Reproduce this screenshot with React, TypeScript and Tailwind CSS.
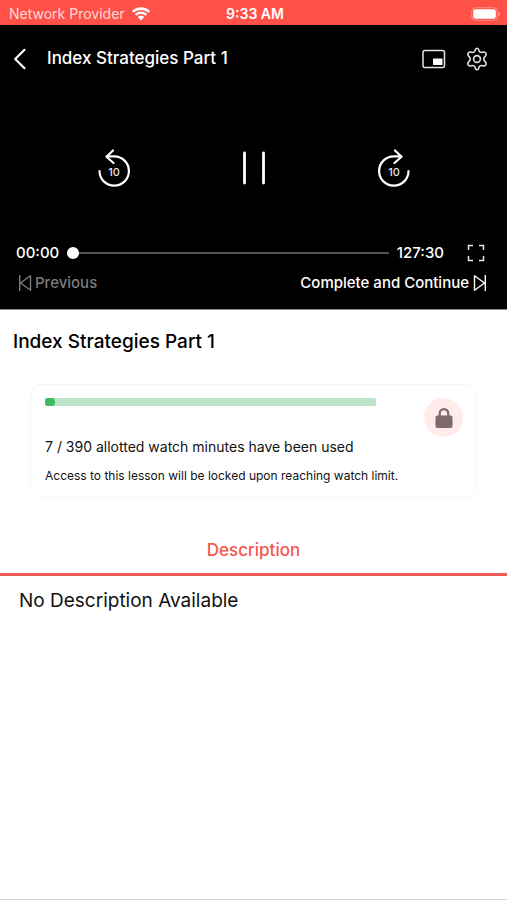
import React, { useState } from 'react';

const WifiIcon = () => (
    <svg width="20" height="14" viewBox="0 0 20 14" fill="white" aria-hidden="true">
        <path d="M10 0.2C6.400 .2 3.200 1.600 .8 3.900L2.600 5.800C4.500 4 7.100 2.900 10 2.900s5.500 1.100 7.400 2.900l1.800-1.900C16.800 1.600 13.600.2 10 .2Z" />
        <path d="M10 4.500c-2.400 0-4.600.9-6.200 2.500l1.800 1.800C6.800 7.700 8.300 7.100 10 7.100s3.200.6 4.400 1.700L16.200 7C14.600 5.400 12.400 4.500 10 4.500Z" />
        <path d="M10 8.700c-1.300 0-2.400.5-3.200 1.300L10 13.400l3.200-3.400C12.400 9.200 11.300 8.700 10 8.700Z" />
    </svg>
);

const BatteryIcon = () => (
    <svg width="30" height="14" viewBox="0 0 30 14" aria-hidden="true">
        <rect x="0.7" y="0.7" width="25.6" height="12.6" rx="3.8" fill="none" stroke="white" strokeOpacity="0.35" />
        <rect x="2.2" y="2.2" width="22.6" height="9.6" rx="2.4" fill="white" />
        <path d="M27.500 4.800c1.100.4 1.700 1.200 1.700 2.200s-.6 1.800-1.700 2.200Z" fill="white" fillOpacity="0.45" />
    </svg>
);

const BackIcon = () => (
    <svg width="14" height="22" viewBox="0 0 14 22" fill="none" stroke="white" strokeWidth="2.2" strokeLinecap="round" strokeLinejoin="round" aria-hidden="true">
        <path d="M11.500 1.800 2.200 11l9.300 9.200" />
    </svg>
);

const PipIcon = () => (
    <svg width="24" height="20" viewBox="0 0 24 20" aria-hidden="true">
        <rect x="1" y="1.500" width="21.500" height="17" rx="2" fill="none" stroke="#e5e5e5" strokeWidth="1.5" />
        <rect x="11" y="9.500" width="9.500" height="6.500" rx="0.5" fill="white" />
    </svg>
);

const GearIcon = () => (
    <svg width="24" height="24" viewBox="0 0 24 24" fill="none" stroke="#e5e5e5" strokeWidth="1.6" strokeLinejoin="round" aria-hidden="true">
        <path d="M10.200 3.200c.5-2.600 3.100-2.600 3.600 0 .3 1.700 2 2.700 3.600 2.100 2.500-.9 4.700 1 3.400 3.200-.3.600-.7.900-1.100 1.300-1.300 1.100-1.300 3.300 0 4.400.4.400.8.700 1.100 1.300 1.300 2.200-.9 4.100-3.400 3.200-1.600-.6-3.300.4-3.600 2.100-.5 2.600-3.100 2.600-3.600 0-.3-1.700-2-2.700-3.600-2.100-2.500.9-4.700-1-3.400-3.200.3-.6.700-.9 1.100-1.300 1.300-1.100 1.300-3.300 0-4.400-.4-.4-.8-.7-1.100-1.300-1.300-2.200.9-4.100 3.400-3.200 1.600.6 3.300-.4 3.600-2.100Z" />
        <circle cx="12" cy="12" r="3.4" />
    </svg>
);

const SeekIcon = ({ forward = false }: { forward?: boolean }) => (
    <svg width="34" height="38" viewBox="0 0 34 38" aria-hidden="true">
        <g
            fill="none"
            stroke="white"
            strokeWidth="2.2"
            strokeLinecap="round"
            strokeLinejoin="round"
            transform={forward ? 'matrix(-1 0 0 1 34 0)' : undefined}
        >
            <path d="M2.500 22A14.700 14.700 0 1 0 17.200 7.300H10" />
            <path d="M16 1.500 9.500 7.800 16.500 14" />
        </g>
        <text x="17" y="27" fill="#e5e5e5" fontSize="11" fontWeight="500" textAnchor="middle">10</text>
    </svg>
);

const PauseIcon = () => (
    <svg width="24" height="34" viewBox="0 0 24 34" stroke="white" strokeWidth="2.8" strokeLinecap="round" aria-hidden="true">
        <path d="M2.500 2v30M21.500 2v30" />
    </svg>
);

const SkipIcon = ({ forward = false }: { forward?: boolean }) => (
    <svg width="14" height="18" viewBox="0 0 14 18" fill="none" stroke="currentColor" strokeWidth="1.4" strokeLinejoin="round" aria-hidden="true">
        <g transform={forward ? undefined : 'matrix(-1 0 0 1 14 0)'}>
            <path d="M1.500 1.800v14.400L11.500 9ZM12.300 1v16" />
        </g>
    </svg>
);

const FullscreenIcon = () => (
    <svg width="18" height="18" viewBox="0 0 18 18" fill="none" stroke="#e5e5e5" strokeWidth="1.5" aria-hidden="true">
        <path d="M1.500 6V1.500H6M12 1.500h4.500V6M16.500 12v4.500H12M6 16.500H1.500V12" />
    </svg>
);

const LockIcon = () => (
    <svg width="18" height="20" viewBox="0 0 18 20" aria-hidden="true">
        <path d="M4.700 9V5.400a4.300 4.300 0 0 1 8.600 0V9" fill="none" stroke="#7d6b6b" strokeWidth="2.2" />
        <rect x="0.5" y="7.500" width="17" height="12.500" rx="2" fill="#7d6b6b" />
    </svg>
);

const WatchLimitCard = ({ used, allotted }: { used: number; allotted: number }) => (
    <section className="mx-[30px] mt-7 rounded-xl border border-[#f7f5f5] py-[13px] pr-[13px] pl-3.5">
        <div className="flex items-start justify-between">
            <div
                role="progressbar"
                aria-label="Watch minutes used"
                aria-valuenow={used}
                aria-valuemax={allotted}
                className="mr-12 h-2 flex-1 rounded-xs bg-[#bde3cb]"
            >
                <div className="h-2 min-w-2.5 rounded-[3px] bg-[#3dbb5e]" style={{ width: `${(used / allotted) * 100}%` }} />
            </div>
            <div className="flex size-[39px] items-center justify-center rounded-full bg-[#ffecea]">
                <LockIcon />
            </div>
        </div>
        <p className="text-sm leading-5">
            {used} / {allotted} allotted watch minutes have been used
        </p>
        <p className="mt-[11px] text-xs leading-4">Access to this lesson will be locked upon reaching watch limit.</p>
    </section>
);

const App = () => {
    const [position, setPosition] = useState(0);
    const title = 'Index Strategies Part 1';

    return (
        <div className="flex min-h-screen flex-col border-b border-[#d4d4d4] bg-white font-['Inter',sans-serif] text-[#111111]">
            <div className="grid h-[25px] grid-cols-3 items-center bg-[#ff5147] pt-0.5 pr-1.5 pl-[9px] text-sm text-white">
                <div className="flex items-center gap-1.5 whitespace-nowrap text-[#ffd9d6]">
                    <span>Network Provider</span>
                    <WifiIcon />
                </div>
                <span className="text-center font-semibold">9:33 AM</span>
                <div className="flex justify-end">
                    <BatteryIcon />
                </div>
            </div>

            <section className="border-b border-[#8a8a8a] bg-black text-white">
                <header className="flex h-[68px] items-center pr-[18px] pl-[13px]">
                    <button aria-label="Back">
                        <BackIcon />
                    </button>
                    <span className="ml-5 flex-1 text-[17px] font-medium">{title}</span>
                    <button aria-label="Picture in picture">
                        <PipIcon />
                    </button>
                    <button aria-label="Settings" className="ml-[19px]">
                        <GearIcon />
                    </button>
                </header>

                <div className="flex items-center justify-between pt-14 pr-24 pl-[97px]">
                    <button aria-label="Back 10 seconds">
                        <SeekIcon />
                    </button>
                    <button aria-label="Pause">
                        <PauseIcon />
                    </button>
                    <button aria-label="Forward 10 seconds">
                        <SeekIcon forward />
                    </button>
                </div>

                <div className="mt-14 flex h-5 items-center pr-[22px] pl-4 text-[15px] font-medium">
                    <span>00:00</span>
                    <input
                        type="range"
                        aria-label="Playback position"
                        min={0}
                        max={7650}
                        value={position}
                        onChange={(e) => setPosition(Number(e.target.value))}
                        className="mx-2 h-3 min-w-0 flex-1 appearance-none bg-transparent [&::-webkit-slider-runnable-track]:h-3 [&::-webkit-slider-runnable-track]:bg-[linear-gradient(#555,#555)] [&::-webkit-slider-runnable-track]:bg-[length:100%_2px] [&::-webkit-slider-runnable-track]:bg-center [&::-webkit-slider-runnable-track]:bg-no-repeat [&::-webkit-slider-thumb]:size-3 [&::-webkit-slider-thumb]:appearance-none [&::-webkit-slider-thumb]:rounded-full [&::-webkit-slider-thumb]:bg-white"
                    />
                    <span>127:30</span>
                    <button aria-label="Full screen" className="ml-[23px]">
                        <FullscreenIcon />
                    </button>
                </div>

                <div className="mt-2.5 flex items-center justify-between pr-5 pb-4 pl-[18px] text-[15px] leading-5">
                    <button className="flex items-center gap-[3px] font-medium text-[#7c7c7c]">
                        <SkipIcon />
                        Previous
                    </button>
                    <button className="flex items-center gap-1 font-medium">
                        Complete and Continue
                        <SkipIcon forward />
                    </button>
                </div>
            </section>

            <h1 className="mt-[18px] px-[13px] text-[19px] leading-7 font-medium text-black">{title}</h1>

            <WatchLimitCard used={7} allotted={390} />

            <div role="tablist" className="mt-8 border-b-3 border-[#ee5a52]">
                <button role="tab" aria-selected="true" className="block w-full pt-2 pb-[11px] text-center text-[17px] leading-6 font-medium text-[#f4564e]">
                    Description
                </button>
            </div>
            <p className="px-[19px] pt-[11px] text-[19px] leading-7">No Description Available</p>
        </div>
    );
};

export default App;
